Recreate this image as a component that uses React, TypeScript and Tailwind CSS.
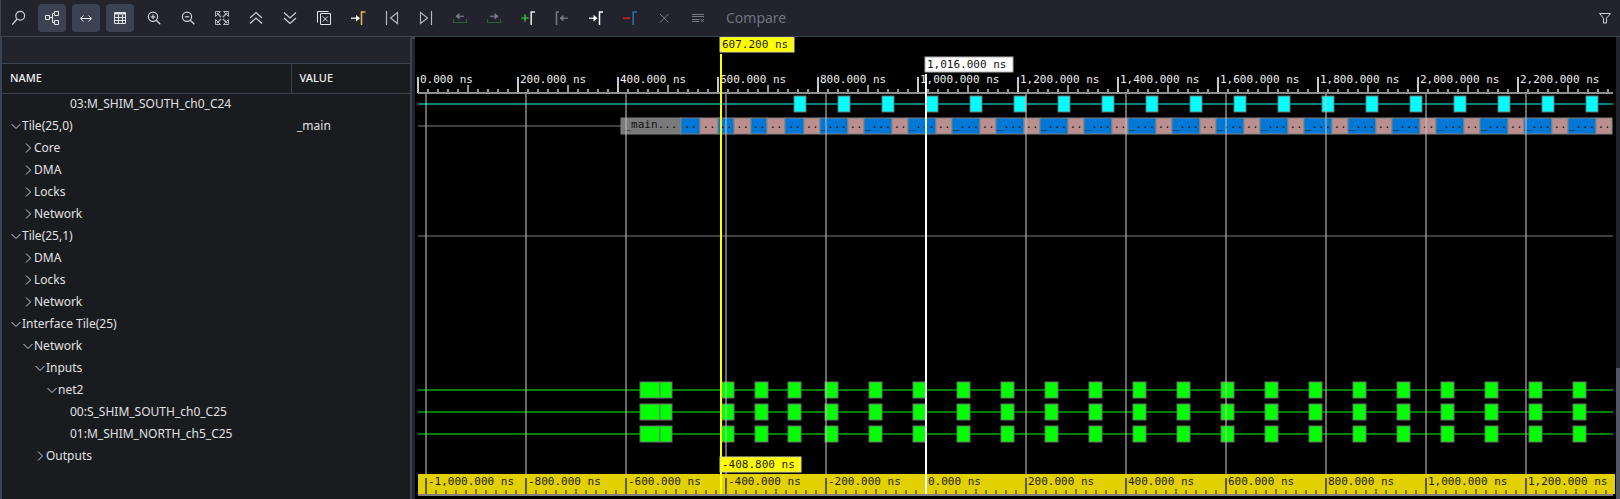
import React, { useState } from "react";

/* ---------- toolbar icons, drawn on a 28 x 28 grid ---------- */

const LIGHT = "#cdd0d6";
const DIM = "#777a83";

type IconProps = { children: React.ReactNode; color?: string };

function Icon({ children, color = LIGHT }: IconProps) {
  return (
    <svg
      viewBox="0 0 28 28"
      className="block h-7 w-7"
      fill="none"
      stroke={color}
      strokeWidth="1"
      aria-hidden="true"
    >
      {children}
    </svg>
  );
}

type Tool = { label: string; active?: boolean; disabled?: boolean; icon: React.ReactNode };

const tools: Tool[] = [
  {
    label: "Search",
    icon: (
      <Icon>
        <circle cx="16.2" cy="11.7" r="4.4" strokeWidth="1.2" />
        <path d="M13 15 8.3 20.6" strokeWidth="1.3" />
      </Icon>
    ),
  },
  {
    label: "Hierarchy",
    active: true,
    icon: (
      <Icon color="#e8e9ec">
        <path d="M7.5 11.5h4v4h-4zM16.5 7.5h4v4h-4zM16.5 16.5h4v4h-4zM11.5 13.5h3M16.5 9.5h-2v9h2" />
      </Icon>
    ),
  },
  {
    label: "Fit width",
    active: true,
    icon: (
      <Icon color="#e8e9ec">
        <path d="M8.5 14.5h11M11.5 11.5l-3 3 3 3M16.5 11.5l3 3-3 3" />
      </Icon>
    ),
  },
  {
    label: "Table",
    active: true,
    icon: (
      <Icon color="#dfe1e5">
        <path d="M8.5 8.5h11v11h-11zM8.5 10h11" />
        <path d="M8.5 9.5h11M8.5 13.5h11M8.5 16.5h11M12.5 10.5v9M16.5 10.5v9" />
      </Icon>
    ),
  },
  {
    label: "Zoom in",
    icon: (
      <Icon>
        <circle cx="13" cy="12.8" r="4.6" strokeWidth="1.2" />
        <path d="M16.3 16.3l4 4" strokeWidth="1.3" />
        <path d="M10.8 12.8h4.4M13 10.6V15" strokeWidth="1.2" />
      </Icon>
    ),
  },
  {
    label: "Zoom out",
    icon: (
      <Icon>
        <circle cx="13" cy="12.8" r="4.6" strokeWidth="1.2" />
        <path d="M16.3 16.3l4 4" strokeWidth="1.3" />
        <path d="M10.8 12.8h4.4" strokeWidth="1.2" />
      </Icon>
    ),
  },
  {
    label: "Zoom fit",
    icon: (
      <Icon color="#b4b7bd">
        <path d="M7.5 12.5v-5h5zM15.5 7.5h5v5zM20.5 15.5v5h-5zM12.5 20.5h-5v-5z" />
        <path d="M9 9l4 4M19 9l-4 4M19 19l-4-4M9 19l4-4" strokeWidth="1.3" />
      </Icon>
    ),
  },
  {
    label: "Collapse all",
    icon: (
      <Icon>
        <path d="M8 14l6-5.5 6 5.5M8 19.5l6-5.5 6 5.5" strokeWidth="1.2" />
      </Icon>
    ),
  },
  {
    label: "Expand all",
    icon: (
      <Icon>
        <path d="M8 8.5l6 5.5 6-5.5M8 14l6 5.5 6-5.5" strokeWidth="1.2" />
      </Icon>
    ),
  },
  {
    label: "Close all",
    icon: (
      <Icon color="#e4e5e8">
        <path d="M7.5 18.5v-11h11" />
        <path d="M10.5 9.5h10v11h-10z" />
        <path d="M12.8 12.5l5 5M17.8 12.5l-5 5" />
      </Icon>
    ),
  },
  {
    label: "Go to cursor",
    icon: (
      <Icon color="#ffffff">
        <path d="M7 14.2h6" strokeWidth="1.2" />
        <path d="M12 11l4 3.2-4 3.2z" fill="#ffffff" stroke="none" />
        <path d="M17.5 21V8h4" stroke="#d6bf58" strokeWidth="1.5" />
      </Icon>
    ),
  },
  {
    label: "Previous transition",
    icon: (
      <Icon color="#b4b7bd">
        <path d="M8.5 7v14" strokeWidth="1.2" />
        <path d="M19.5 8.5v11l-7-5.5z" strokeWidth="1.1" />
      </Icon>
    ),
  },
  {
    label: "Next transition",
    icon: (
      <Icon color="#b4b7bd">
        <path d="M19.5 7v14" strokeWidth="1.2" />
        <path d="M8.5 8.5v11l7-5.5z" strokeWidth="1.1" />
      </Icon>
    ),
  },
  {
    label: "Previous edge",
    disabled: true,
    icon: (
      <Icon color={DIM}>
        <path d="M10 12.3h8" strokeWidth="1.2" />
        <path d="M13.5 9l-4 3.3 4 3.3z" fill={DIM} stroke="none" />
        <path d="M7.5 15v3.5h13V15" stroke="#2d5f35" strokeWidth="1.2" />
      </Icon>
    ),
  },
  {
    label: "Next edge",
    disabled: true,
    icon: (
      <Icon color={DIM}>
        <path d="M10 12.3h8" strokeWidth="1.2" />
        <path d="M14.5 9l4 3.3-4 3.3z" fill={DIM} stroke="none" />
        <path d="M7.5 15v3.5h13V15" stroke="#2d5f35" strokeWidth="1.2" />
      </Icon>
    ),
  },
  {
    label: "Add marker",
    icon: (
      <Icon color="#e8e9ec">
        <path d="M7.5 14h7M11 10.5v7" stroke="#2fb344" strokeWidth="1.6" />
        <path d="M17.2 21V8H21" strokeWidth="1.5" />
      </Icon>
    ),
  },
  {
    label: "Previous marker",
    disabled: true,
    icon: (
      <Icon color={DIM}>
        <path d="M8.5 21V8H11" strokeWidth="1.5" />
        <path d="M12 14.2h8" strokeWidth="1.2" />
        <path d="M15.5 10.8l-4 3.4 4 3.4z" fill={DIM} stroke="none" />
      </Icon>
    ),
  },
  {
    label: "Next marker",
    icon: (
      <Icon color="#ffffff">
        <path d="M7 14.2h6" strokeWidth="1.2" />
        <path d="M11.5 10.8l4 3.4-4 3.4z" fill="#ffffff" stroke="none" />
        <path d="M17.5 21V8H21" strokeWidth="1.5" />
      </Icon>
    ),
  },
  {
    label: "Remove marker",
    icon: (
      <Icon>
        <path d="M7 14.2h7" stroke="#c42020" strokeWidth="1.9" />
        <path d="M17.2 21V8H21" stroke="#2f6f9f" strokeWidth="1.6" />
      </Icon>
    ),
  },
  {
    label: "Clear",
    disabled: true,
    icon: (
      <Icon color={DIM}>
        <path d="M10 10l8.5 8.5M18.5 10L10 18.5" />
      </Icon>
    ),
  },
  {
    label: "Clear list",
    disabled: true,
    icon: (
      <Icon color={DIM}>
        <path d="M8 10.5h12M8 12.5h12M8 15.5h7.5M8 17.5h7.5M16.8 15l3 3M19.8 15l-3 3" />
      </Icon>
    ),
  },
];

function Toolbar() {
  return (
    <header className="flex h-[37px] items-center gap-1.5 border-b border-l border-[#3b4252] bg-[#23232d] pr-[1px] pl-[3px]">
      {tools.map((t) => (
        <button
          key={t.label}
          type="button"
          aria-label={t.label}
          title={t.label}
          disabled={t.disabled}
          className={
            t.active
              ? "h-7 w-7 shrink-0 rounded bg-[#3b4252]"
              : "h-7 w-7 shrink-0 rounded hover:bg-[#2e3240]"
          }
        >
          {t.icon}
        </button>
      ))}
      <button type="button" className="ml-2 pb-0.5 text-[14px] text-[#6f7481]">
        Compare
      </button>
      <button type="button" aria-label="Filter" title="Filter" className="ml-auto h-7 w-7 shrink-0">
        <Icon>
          <path d="M8.5 9.5h11l-4 4.8v4.7h-3v-4.7z" />
        </Icon>
      </button>
    </header>
  );
}

/* ---------- signal tree ---------- */

type Row = { name: string; depth: number; open?: boolean; leaf?: boolean; value?: string };

const rows: Row[] = [
  { name: "03:M_SHIM_SOUTH_ch0_C24", depth: 4, leaf: true },
  { name: "Tile(25,0)", depth: 0, open: true, value: "_main" },
  { name: "Core", depth: 1 },
  { name: "DMA", depth: 1 },
  { name: "Locks", depth: 1 },
  { name: "Network", depth: 1 },
  { name: "Tile(25,1)", depth: 0, open: true },
  { name: "DMA", depth: 1 },
  { name: "Locks", depth: 1 },
  { name: "Network", depth: 1 },
  { name: "Interface Tile(25)", depth: 0, open: true },
  { name: "Network", depth: 1, open: true },
  { name: "Inputs", depth: 2, open: true },
  { name: "net2", depth: 3, open: true },
  { name: "00:S_SHIM_SOUTH_ch0_C25", depth: 4, leaf: true },
  { name: "01:M_SHIM_NORTH_ch5_C25", depth: 4, leaf: true },
  { name: "Outputs", depth: 2 },
];

const indent = ["pl-2", "pl-5", "pl-8", "pl-11", "pl-14"];

function Twisty({ open, name }: { open?: boolean; name: string }) {
  return (
    <button type="button" aria-label={name} aria-expanded={!!open} className="h-3 w-3 shrink-0">
      <svg viewBox="0 0 12 12" className="block h-3 w-3" fill="none" stroke="#d0d1d4">
        <path d={open ? "M1.5 5 6 9.5 10.5 5" : "M4 2.5l4.5 4.5L4 11.5"} />
      </svg>
    </button>
  );
}

function SignalTree() {
  const [selected, setSelected] = useState<number | null>(null);
  return (
    <aside className="flex w-[412px] shrink-0 flex-col border-r-2 border-l-2 border-[#3b4252] bg-[#1a1b1f]">
      <div className="h-[26px] shrink-0 bg-[#23232d]" />
      <table className="w-full table-fixed border-collapse text-left">
        <colgroup>
          <col className="w-[289px]" />
          <col />
        </colgroup>
        <thead>
          <tr className="h-[30px] border-y border-[#3b4252] text-[11px] text-[#f0f1f3]">
            <th className="border-r border-[#3b4252] p-0 pl-2 font-medium">NAME</th>
            <th className="p-0 pl-2 font-medium">VALUE</th>
          </tr>
        </thead>
        <tbody>
          {rows.map((r, i) => (
            <tr
              key={i}
              onClick={() => setSelected(i)}
              className={
                selected === i
                  ? "h-[22px] bg-[#2b3040] align-top text-[12px] leading-[19px] text-[#e0e1e3]"
                  : "h-[22px] align-top text-[12px] leading-[19px] text-[#e0e1e3]"
              }
            >
              <td className={"p-0 " + indent[r.depth]}>
                <div className="flex items-center">
                  {r.leaf ? <span className="w-3" /> : <Twisty open={r.open} name={r.name} />}
                  <span className="whitespace-nowrap">{r.name}</span>
                </div>
              </td>
              <td className="p-0 pl-1.5">{r.value}</td>
            </tr>
          ))}
        </tbody>
      </table>
    </aside>
  );
}

/* ---------- waveform view ---------- */

const ORIGIN = 3;
const END = 1198;
const STEP = 100;
const CURSOR = 511;
const PRIMARY = 306;
const rowY = (i: number) => 67 + 22 * i;
const ns = (v: number) => v.toLocaleString("en-US", { minimumFractionDigits: 3 }) + " ns";
const range = (n: number) => Array.from({ length: n }, (_, i) => i);

type Box = { x: number; w: number };
const cyan: Box[] = range(19).map((i) => ({ x: 379 + 44 * i, w: 12 }));
const green: Box[] = [
  { x: 225, w: 20 },
  { x: 245, w: 12 },
  { x: 306, w: 13 },
  { x: 340, w: 13 },
  { x: 373, w: 13 },
  ...range(18).map((i) => ({ x: 410 + 44 * i, w: 13 })),
];

type Call = Box & { fill: string; label: string };
const BLUE = "#0078d7";
const ROSE = "#bc8f8f";
const calls: Call[] = [
  { x: 206, w: 60, fill: "#7a7a7a", label: "_main..." },
  { x: 266, w: 19, fill: BLUE, label: ".." },
  { x: 285, w: 18, fill: ROSE, label: ".." },
  { x: 303, w: 16, fill: BLUE, label: ".." },
  { x: 319, w: 17, fill: ROSE, label: ".." },
  { x: 336, w: 16, fill: BLUE, label: ".." },
  { x: 352, w: 18, fill: ROSE, label: ".." },
  { x: 370, w: 19, fill: BLUE, label: ".." },
  { x: 389, w: 16, fill: ROSE, label: ".." },
  ...range(18).flatMap((i) => [
    { x: 405 + 44 * i, w: 28, fill: BLUE, label: "_..." },
    { x: 433 + 44 * i, w: 16, fill: ROSE, label: ".." },
  ]),
];

function Pulses({ row, boxes, fill, line }: { row: number; boxes: Box[]; fill: string; line: string }) {
  const y = rowY(row);
  return (
    <g>
      <rect x={ORIGIN} y={y - 1} width={END - ORIGIN} height="2" fill={line} />
      {boxes.map((b) => (
        <rect key={b.x} x={b.x} y={y - 8} width={b.w} height="16" fill={fill} stroke="#707070" />
      ))}
    </g>
  );
}

function Ticks({ start, major, mid, minor, bottom }: { start: number; major: number; mid: number; minor: number; bottom: number }) {
  const count = Math.floor((END - start) / 10) + 1;
  return (
    <g>
      {range(count).map((i) => {
        const top = i % 10 === 0 ? major : i % 5 === 0 ? mid : minor;
        return <rect key={i} x={start + 10 * i - 1} y={top} width="2" height={bottom - top} opacity={i % 10 === 0 ? 1 : 0.75} />;
      })}
    </g>
  );
}

function Waveform() {
  return (
    <main className="min-w-0 flex-1 overflow-hidden bg-black">
      <svg
        className="block h-[462px] w-full font-['DejaVu_Sans_Mono',monospace] text-[11px]"
        role="img"
        aria-label="Signal waveforms"
      >
        <g fill="#c8c8c8">
          <Ticks start={ORIGIN} major={40} mid={48} minor={52} bottom={56} />
          <rect x={ORIGIN} y="55" width={END - ORIGIN} height="2" fill="#909090" />
        </g>
        <g fill="#f0f0f0">
          {range(12).map((i) => (
            <text key={i} x={ORIGIN + 2 + STEP * i} y="46">
              {ns(i * 200)}
            </text>
          ))}
        </g>

        <Pulses row={0} boxes={cyan.filter((b) => b.x < END)} fill="#00ffff" line="#008080" />
        <rect x={ORIGIN} y={rowY(1) - 1} width={END - ORIGIN} height="2" fill="#404040" />
        {calls.map((c) => (
          <g key={c.x}>
            <rect x={c.x} y={rowY(1) - 8} width={c.w} height="16" fill={c.fill} stroke="#808080" />
            <text x={c.x + c.w / 2} y={rowY(1) + 2} textAnchor="middle" fill="#101010">
              {c.label}
            </text>
          </g>
        ))}
        <rect x={ORIGIN} y={rowY(6) - 1} width={END - ORIGIN} height="2" fill="#404040" />
        <Pulses row={13} boxes={green} fill="#00ff00" line="#008000" />
        <Pulses row={14} boxes={green} fill="#00ff00" line="#008000" />
        <Pulses row={15} boxes={green} fill="#00ff00" line="#008000" />

        {range(12).map((i) => (
          <rect key={i} x={10 + STEP * i} y="57" width="2" height="380" fill="#c0c0c0" opacity="0.55" />
        ))}

        <rect x={ORIGIN} y="437" width={END - ORIGIN + 2} height="20" fill="#e2d000" />
        <g fill="#5f5a10">
          <Ticks start={11} major={441} mid={452} minor={453} bottom={457} />
          <rect x={ORIGIN} y="457" width={END - ORIGIN} height="2" fill="#808080" />
        </g>
        <g fill="#1c1a00">
          {range(12).map((i) => (
            <text key={i} x={13 + STEP * i} y="448">
              {ns(i * 200 - 1000)}
            </text>
          ))}
        </g>

        <rect x={PRIMARY - 1} y="17" width="2" height="440" fill="#ffff00" />
        <rect x={PRIMARY - 1} y="0" width="74" height="15" fill="#ffff00" stroke="#d8d8a0" />
        <text x={PRIMARY + 1} y="11" fill="#1c1a00">
          607.200 ns
        </text>
        <rect x={PRIMARY - 1} y="420" width="81" height="15" fill="#ffff00" stroke="#d8d8a0" />
        <text x={PRIMARY + 1} y="431" fill="#1c1a00">
          -408.800 ns
        </text>

        <rect x={CURSOR - 1} y="37" width="2" height="420" fill="#ffffff" />
        <rect x={CURSOR - 1} y="20" width="88" height="15" fill="#ffffff" stroke="#b0b0b0" />
        <text x={CURSOR + 1} y="31" fill="#101010">
          1,016.000 ns
        </text>
      </svg>
    </main>
  );
}

export default function App() {
  return (
    <div className="flex min-h-screen flex-col bg-[#23232d] font-['Noto_Sans',sans-serif]">
      <Toolbar />
      <div className="flex flex-1">
        <SignalTree />
        <div className="w-[3px] shrink-0 border-t-2 border-[#3b4252] bg-[#23232d]" />
        <Waveform />
        <div className="flex w-1 shrink-0 flex-col bg-[#23232d]">
          <div className="mt-auto h-[131px] bg-[#4f5563]" />
        </div>
      </div>
    </div>
  );
}
